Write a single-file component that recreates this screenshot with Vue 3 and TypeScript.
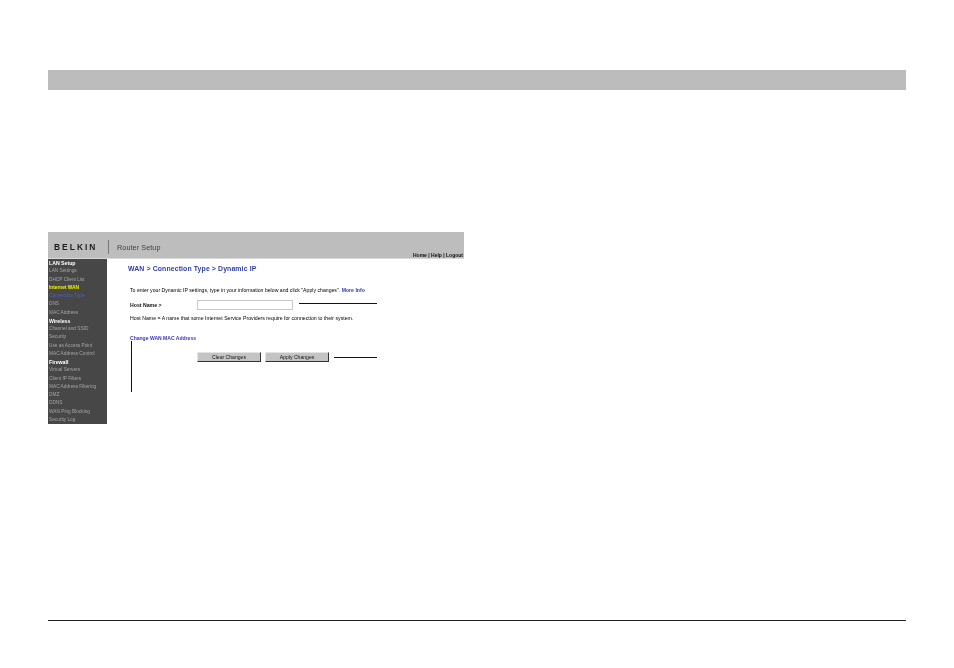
<script setup lang="ts">
interface NavItem { label: string; kind: 'head' | 'link' | 'active' | 'current' }
const nav: NavItem[] = [
  { label: 'LAN Setup', kind: 'head' },
  { label: 'LAN Settings', kind: 'link' },
  { label: 'DHCP Client List', kind: 'link' },
  { label: 'Internet WAN', kind: 'active' },
  { label: 'Connection Type', kind: 'current' },
  { label: 'DNS', kind: 'link' },
  { label: 'MAC Address', kind: 'link' },
  { label: 'Wireless', kind: 'head' },
  { label: 'Channel and SSID', kind: 'link' },
  { label: 'Security', kind: 'link' },
  { label: 'Use as Access Point', kind: 'link' },
  { label: 'MAC Address Control', kind: 'link' },
  { label: 'Firewall', kind: 'head' },
  { label: 'Virtual Servers', kind: 'link' },
  { label: 'Client IP Filters', kind: 'link' },
  { label: 'MAC Address Filtering', kind: 'link' },
  { label: 'DMZ', kind: 'link' },
  { label: 'DDNS', kind: 'link' },
  { label: 'WAN Ping Blocking', kind: 'link' },
  { label: 'Security Log', kind: 'link' }
]
</script>

<template>
  <div class="page">
    <div class="top-bar"></div>
    <section class="figure">
      <header class="shot-head">
        <span class="logo">BELKIN</span>
        <span class="divider"></span>
        <span class="product">Router Setup</span>
        <span class="util">Home | Help | Logout</span>
      </header>
      <div class="shot-body">
        <nav class="side">
          <div v-for="item in nav" :key="item.label" class="nav-item" :class="item.kind">{{ item.label }}</div>
        </nav>
        <main class="main">
          <h1 class="soft">WAN &gt; Connection Type &gt; Dynamic IP</h1>
          <p class="intro soft">To enter your Dynamic IP settings, type in your information below and click "Apply changes". <a>More Info</a></p>
          <div class="host-row">
            <label class="soft">Host Name &gt;</label>
            <span class="field"></span>
          </div>
          <p class="note soft">Host Name = A name that some Internet Service Providers require for connection to their system.</p>
          <a class="mac soft">Change WAN MAC Address</a>
          <div class="buttons">
            <span class="btn soft">Clear Changes</span>
            <span class="btn soft">Apply Changes</span>
          </div>
          <i class="call call-host"></i>
          <i class="call call-apply"></i>
          <i class="call call-mac"></i>
        </main>
      </div>
    </section>
    <div class="bottom-rule"></div>
  </div>
</template>

<style>
html, body { margin: 0; background: #fff; }
</style>

<style scoped>
.page {
  box-sizing: border-box;
  width: 954px;
  height: 668px;
  padding: 70px 48px 0;
  display: flex;
  flex-direction: column;
  font-family: "Liberation Sans", Arial, sans-serif;
  background: #fff;
}
.top-bar { height: 20px; background: #bcbcbc; flex: none; }
.figure { width: 416px; height: 192px; margin-top: 142px; flex: none; display: flex; flex-direction: column; }
.soft { filter: blur(0.25px); }
.shot-head {
  height: 27px;
  flex: none;
  box-sizing: border-box;
  background: #bdbdbd;
  border-bottom: 1px solid #d8d8d8;
  display: flex;
  align-items: center;
  position: relative;
  padding: 4px 0 0 6px;
}
.logo { font-size: 8.4px; font-weight: 700; letter-spacing: 2.05px; color: #1c1c1c; width: 50px; filter: blur(0.3px); }
.divider { width: 1px; height: 14px; background: #777; margin-left: 4px; }
.product { font-size: 7.2px; color: #404040; margin-left: 8px; letter-spacing: .1px; filter: blur(0.3px); }
.util { position: absolute; right: 1px; bottom: 0; font-size: 5px; font-weight: 700; color: #111; filter: blur(0.25px); }
.shot-body { flex: 1; display: flex; min-height: 0; }
.side {
  width: 59px;
  flex: none;
  box-sizing: border-box;
  background: #474747;
  overflow: hidden;
}
.nav-item { height: 8.26px; line-height: 8.26px; font-size: 4.75px; color: #a4a4a4; white-space: nowrap; padding-left: 1px; filter: blur(0.3px); }
.nav-item.head { color: #fff; font-weight: 700; font-size: 5.2px; }
.nav-item.active { color: #f4f400; font-weight: 700; }
.nav-item.current { color: #4a62c0; }
.main { flex: 1; position: relative; padding: 6px 0 0 21px; color: #111; }
h1 { margin: 0; font-size: 6.9px; line-height: 8px; font-weight: 700; color: #3040a8; letter-spacing: .12px; }
.intro { margin: 14px 0 0 2px; font-size: 5.17px; line-height: 7px; color: #000; white-space: nowrap; }
.intro a { color: #2c3cb0; font-weight: 700; }
.host-row { display: flex; align-items: center; margin: 5px 0 0 2px; height: 11px; }
.host-row label { width: 67px; font-size: 5.2px; font-weight: 700; color: #111; }
.field { width: 96px; height: 10px; box-sizing: border-box; border: 1px solid #c8c8c8; background: #fff; }
.note { margin: 5px 0 0 2px; font-size: 5.21px; line-height: 7px; color: #000; white-space: nowrap; }
.mac { display: block; margin: 13px 0 0 2px; font-size: 5.05px; line-height: 7px; font-weight: 700; color: #3a35b8; }
.buttons { display: flex; gap: 4px; margin: 10px 0 0 69px; }
.btn {
  width: 64px;
  height: 10px;
  box-sizing: border-box;
  background: #c4c4c4;
  border: 1px solid #e4e4e4;
  border-right-color: #333;
  border-bottom-color: #333;
  font-size: 5.1px;
  line-height: 8px;
  text-align: center;
  color: #111;
}
.call { position: absolute; background: #111; display: block; }
.call-host { left: 192px; top: 44px; width: 78px; height: 1px; }
.call-apply { left: 227px; top: 98px; width: 43px; height: 1px; }
.call-mac { left: 24px; top: 82px; width: 1px; height: 51px; }
.bottom-rule { height: 1px; background: #222; margin-top: auto; margin-bottom: 47px; flex: none; }
</style>
